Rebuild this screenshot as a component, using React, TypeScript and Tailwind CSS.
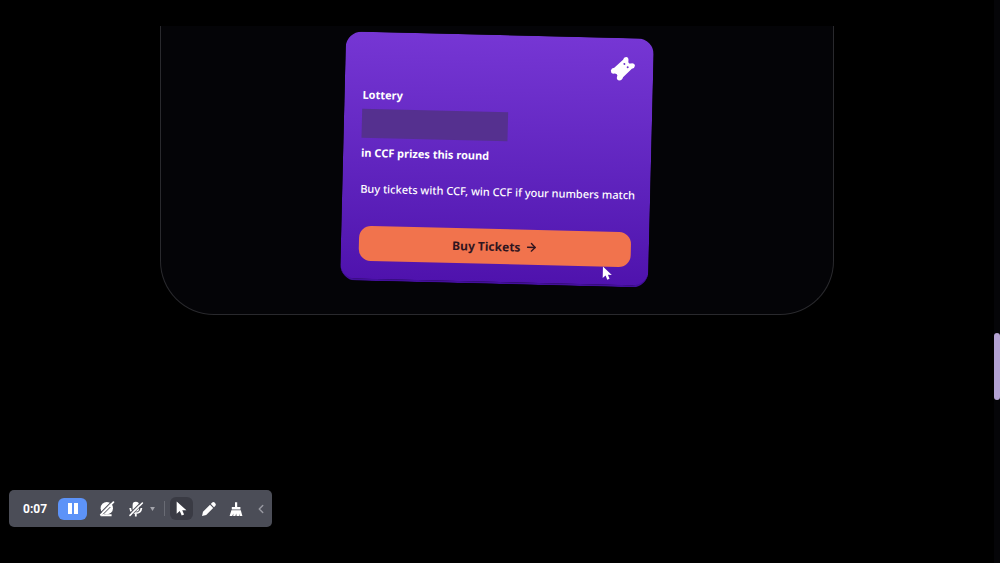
import type { ReactNode } from 'react';
import { ArrowRight, ChevronLeft } from 'lucide-react';

export default function App() {
  return (
    <div className="flex min-h-screen bg-black font-['Noto_Sans',sans-serif] text-white">
      <main className="flex-1 pt-[26px]">
        <section className="mx-auto flex w-[67.8%] justify-center rounded-b-[54px] border-x border-b border-[#29292d] bg-[#040407] pt-[9px] pb-[30px]">
          <LotteryCard />
        </section>
      </main>
      <div className="w-[6px] bg-[#050508] pt-[333px]">
        <div className="h-[67px] rounded-full bg-[#b5a3d4]" />
      </div>
      <RecorderToolbar />
    </div>
  );
}

function LotteryCard() {
  return (
    <article className="relative w-[308px] rotate-[1.4deg] rounded-2xl border-b-2 border-[#430f9b] bg-linear-to-b from-[#7636d4] to-[#4f12ad] px-[18px] pt-[18px] pb-[18px]">
      <div className="flex justify-end">
        <TicketIcon />
      </div>
      <h2 className="mt-3 text-[11px] leading-4 font-bold">Lottery</h2>
      <div className="mt-[6px] h-[29px] w-[146px] bg-[#55308f]" />
      <p className="mt-[7px] text-[11px] leading-4 font-bold">in CCF prizes this round</p>
      <p className="mt-5 text-[11px] leading-4 font-medium whitespace-nowrap">
        Buy tickets with CCF, win CCF if your numbers match
      </p>
      <button className="mt-[29px] flex h-[35px] w-full items-center justify-center gap-1 rounded-xl bg-[#f1734d] text-xs font-bold text-[#30151f]">
        Buy Tickets
        <ArrowRight size={13} strokeWidth={2.5} />
      </button>
      <PointerIcon className="absolute right-9 bottom-1 h-[15px] w-[10px]" />
    </article>
  );
}

function RecorderToolbar() {
  return (
    <div className="fixed bottom-9 left-[9px] flex h-[37px] items-center rounded-[5px] bg-[#4b4d57] pr-1 pl-[14px]">
      <span className="w-[35px] font-['Roboto',sans-serif] text-xs font-bold">0:07</span>
      <button
        aria-label="Pause"
        className="flex h-[22px] w-[29px] items-center justify-center gap-[2px] rounded-md bg-[#5d93f8]"
      >
        <span className="h-[11px] w-1 bg-white" />
        <span className="h-[11px] w-1 bg-white" />
      </button>
      <ToolButton label="Camera off" className="ml-2">
        <CameraOffIcon />
      </ToolButton>
      <ToolButton label="Microphone off" className="ml-[6px]">
        <MicOffIcon />
      </ToolButton>
      <button aria-label="Microphone options" className="flex w-[10px] justify-center">
        <svg viewBox="0 0 6 5" className="h-1 w-[5px] fill-[#a4a5ac]">
          <path d="M0 0h6L3 5z" />
        </svg>
      </button>
      <div className="mr-[5px] ml-[7px] h-[15px] w-px bg-[#696b74]" />
      <ToolButton label="Pointer" className="rounded-md bg-[#3a3b44]">
        <PointerIcon className="h-[15px] w-[11px]" />
      </ToolButton>
      <ToolButton label="Draw" className="ml-1">
        <PencilIcon />
      </ToolButton>
      <ToolButton label="Clear" className="ml-1">
        <BroomIcon />
      </ToolButton>
      <button aria-label="Collapse" className="ml-[7px] text-[#999aa2]">
        <ChevronLeft size={14} strokeWidth={2.5} />
      </button>
    </div>
  );
}

function ToolButton({ label, className, children }: { label: string; className?: string; children: ReactNode }) {
  return (
    <button aria-label={label} className={`flex size-[23px] items-center justify-center ${className ?? ''}`}>
      {children}
    </button>
  );
}

function TicketIcon() {
  return (
    <svg viewBox="0 0 25 25" className="size-[25px]">
      <path
        d="M12.6 3.6Q13.2 1 15.6 1Q18.2 1.4 18 4Q17.4 6.4 18.8 7.2Q20.2 7.6 21.6 7Q24.4 7 24.6 9.4Q24.4 12 21.6 12.6L13 21.2Q12.4 24.2 9.4 24.6Q6.6 24.2 6.8 21.6Q8 19 6.4 18.2Q5 17.4 3 18Q0.6 17.6 0.6 14.8Q1.2 12.4 4 12Z"
        fill="white"
      />
      <circle cx="14" cy="7.8" r="1" fill="#6d30cc" />
      <circle cx="17.4" cy="11" r="1" fill="#6d30cc" />
    </svg>
  );
}

function PointerIcon({ className }: { className: string }) {
  return (
    <svg viewBox="0 0 10 14" className={className}>
      <path d="M0.5 0.5V12L3.4 9.4L5.2 13.5L7.4 12.5L5.7 8.6H9.6Z" fill="white" />
    </svg>
  );
}

function CameraOffIcon() {
  return (
    <svg viewBox="0 0 16 16" className="size-4">
      <circle cx="7.8" cy="7.2" r="6.2" fill="white" />
      <path d="M1.6 15.2Q3 12.6 5.4 13.2H12.6V15.2Z" fill="white" />
      <path d="M0.8 12.6L13.2 0.2" stroke="#4b4d57" strokeWidth="1.2" />
      <path d="M1.8 13.8L14.4 1.2" stroke="white" strokeWidth="1.8" strokeLinecap="round" />
      <path d="M5 12.4L11.4 6" stroke="#4b4d57" strokeWidth="1" />
    </svg>
  );
}

function MicOffIcon() {
  return (
    <svg viewBox="0 0 16 16" className="size-4">
      <rect x="4.6" y="0.8" width="6.4" height="9.8" rx="3.2" fill="white" />
      <path d="M2.2 7Q2.8 12.2 7.8 12.2Q12.8 12.2 13.4 7M7.8 12V15.4" stroke="white" strokeWidth="1.8" fill="none" />
      <path d="M1.2 13.2L13.2 1.2" stroke="#4b4d57" strokeWidth="1.2" />
      <path d="M2 14.4L14.4 2" stroke="white" strokeWidth="1.6" strokeLinecap="round" />
      <path d="M4.4 13.4L12 5.8" stroke="#4b4d57" strokeWidth="0.8" />
    </svg>
  );
}

function PencilIcon() {
  return (
    <svg viewBox="0 0 16 16" className="size-4" fill="white">
      <path d="M1 15L2 10.8L9 3.8L12.2 7L5.2 14Z" />
      <path d="M9.8 3L11.2 1.6Q12.4 0.6 13.6 1.6L14.4 2.4Q15.4 3.6 14.4 4.8L13 6.2Z" />
    </svg>
  );
}

function BroomIcon() {
  return (
    <svg viewBox="0 0 16 16" className="size-4" fill="white">
      <path d="M7 1.2H9.2V6H12.4V8.4H3.8V6H7Z" />
      <path d="M3.4 9.2H12.8L14.4 15H11.6L11 12.6V15H8.6L8.2 12.6L7.4 15H5.2L5.4 12.6L4.2 15H1.6Z" />
    </svg>
  );
}
